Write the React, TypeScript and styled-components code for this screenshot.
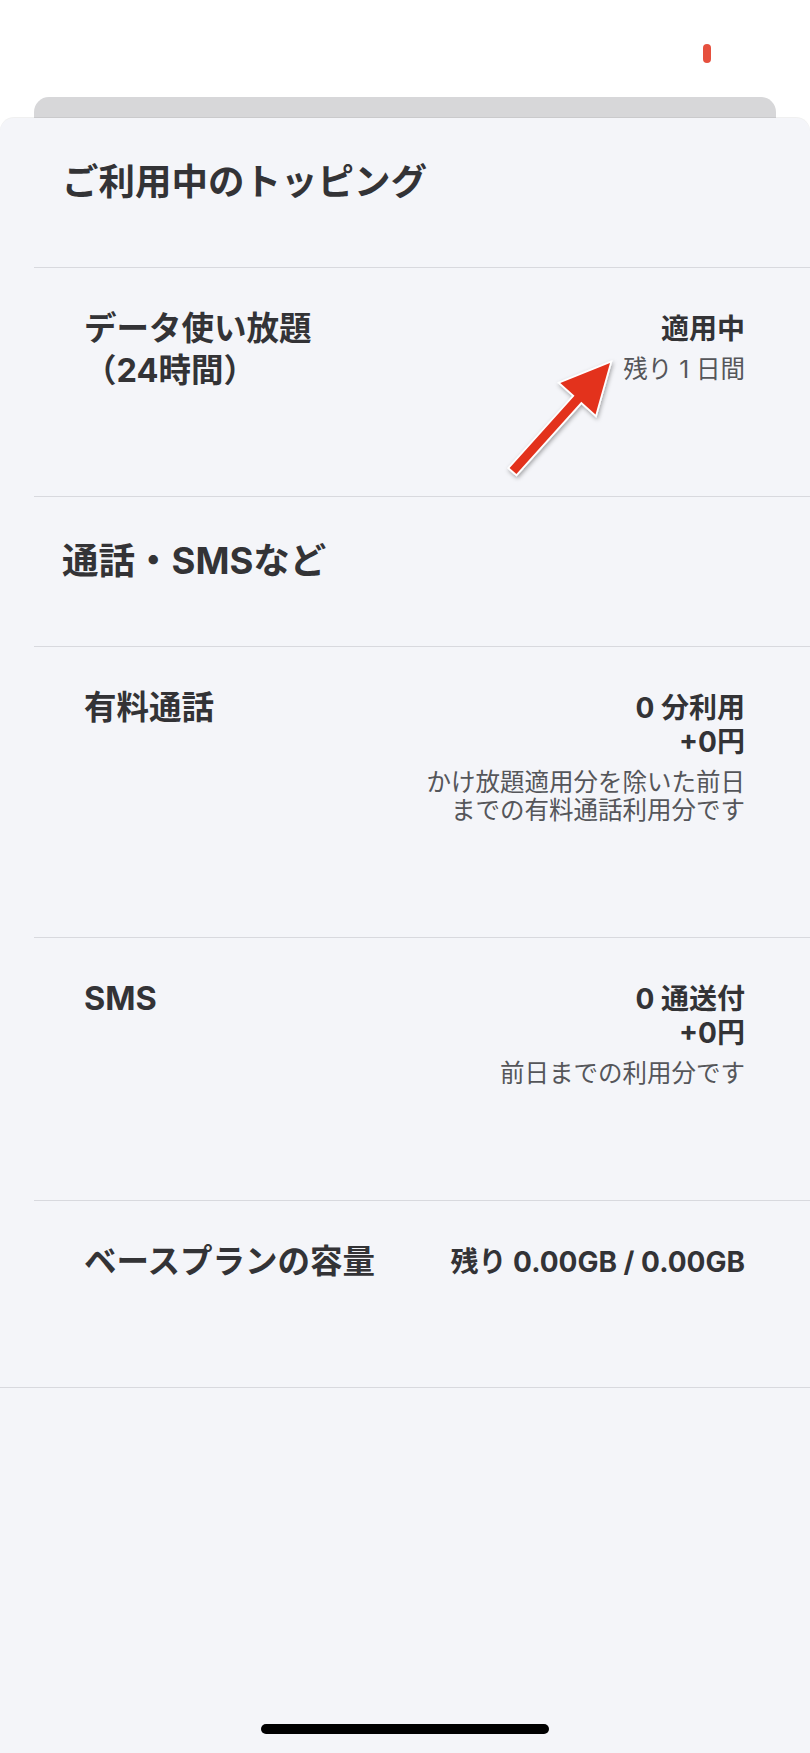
import React from 'react';
import styled, { createGlobalStyle } from 'styled-components';

const GlobalStyle = createGlobalStyle`
  html, body {
    margin: 0;
    padding: 0;
    background: #ffffff;
  }
  body {
    font-family: Inter, "Noto Sans CJK JP", "Noto Sans", sans-serif;
    color: #303033;
  }
  * {
    box-sizing: border-box;
  }
`;

interface UsageRow {
  label: React.ReactNode;
  values: string[];
  note?: React.ReactNode;
  pointer?: boolean;
}

const toppings: UsageRow[] = [
  {
    label: (
      <>
        データ使い放題
        <br />
        （24時間）
      </>
    ),
    values: ['適用中'],
    note: '残り 1 日間',
    pointer: true,
  },
];

const calls: UsageRow[] = [
  {
    label: '有料通話',
    values: ['0 分利用', '+0円'],
    note: (
      <>
        かけ放題適用分を除いた前日
        <br />
        までの有料通話利用分です
      </>
    ),
  },
  {
    label: 'SMS',
    values: ['0 通送付', '+0円'],
    note: '前日までの利用分です',
  },
  {
    label: 'ベースプランの容量',
    values: ['残り 0.00GB / 0.00GB'],
  },
];

// red annotation arrow drawn over the first row
const PointerArrow: React.FC = () => (
  <ArrowSvg width={135} height={150} viewBox="495 340 135 150">
    <defs>
      <filter id="arrowShadow" x="-30%" y="-30%" width="160%" height="160%">
        <feDropShadow dx="1" dy="2" stdDeviation="2" floodColor="#000" floodOpacity="0.35" />
      </filter>
    </defs>
    <polygon
      points="516.4,473 581.3,400.8 595.5,413.6 610,362 560.3,382 574.5,394.8 509.6,467"
      fill="#e3321f"
      stroke="#ffffff"
      strokeWidth={3.5}
      strokeLinejoin="miter"
      paintOrder="stroke"
      filter="url(#arrowShadow)"
    />
  </ArrowSvg>
);

const Row: React.FC<{ row: UsageRow }> = ({ row }) => (
  <ItemRow>
    <ItemLabel>{row.label}</ItemLabel>
    <ItemValues>
      {row.values.map((v) => (
        <ValueLine key={v}>{v}</ValueLine>
      ))}
      {row.note && <NoteText>{row.note}</NoteText>}
    </ItemValues>
    {row.pointer && <PointerArrow />}
  </ItemRow>
);

const App: React.FC = () => {
  return (
    <>
      <GlobalStyle />
      <Screen>
        <StatusArea>
          <RecordingDot />
        </StatusArea>
        <BehindCard />
        <Sheet>
          <ListFrame>
            <ListInner>
              <SectionTitle>ご利用中のトッピング</SectionTitle>
              {toppings.map((r, i) => (
                <Row key={i} row={r} />
              ))}
              <SectionTitle $divided>通話・SMSなど</SectionTitle>
              {calls.map((r, i) => (
                <Row key={i} row={r} />
              ))}
            </ListInner>
          </ListFrame>
          <HomeIndicator />
        </Sheet>
      </Screen>
    </>
  );
};

const Screen = styled.div`
  width: 810px;
  min-height: 1753px;
  display: flex;
  flex-direction: column;
  background: #ffffff;
  overflow: hidden;
`;

const StatusArea = styled.div`
  height: 97px;
  display: flex;
  justify-content: flex-end;
  align-items: flex-start;
  padding: 44px 99px 0 0;
`;

const RecordingDot = styled.div`
  width: 8px;
  height: 19px;
  border-radius: 4px;
  background: #e6503e;
`;

const BehindCard = styled.div`
  height: 21px;
  margin: 0 34px;
  background: #d7d7d9;
  border-radius: 15px 15px 0 0;
`;

const Sheet = styled.div`
  flex: 1;
  display: flex;
  flex-direction: column;
  background: #f4f5f9;
  border-radius: 14px 14px 0 0;
  box-shadow: 0 -1px 0 rgba(0, 0, 0, 0.06);
`;

const ListFrame = styled.div`
  border-bottom: 1px solid #d8d9de;
`;

const ListInner = styled.div`
  margin-left: 34px;
`;

const SectionTitle = styled.h2<{ $divided?: boolean }>`
  margin: 0;
  padding: 40px 0 61px 28px;
  font-size: 36.5px;
  line-height: 48px;
  font-weight: 700;
  color: #333336;
  border-top: ${({ $divided }) => ($divided ? '1px solid #d8d9de' : 'none')};
`;

const ItemRow = styled.div`
  position: relative;
  display: flex;
  justify-content: space-between;
  align-items: flex-start;
  gap: 24px;
  padding: 40px 65px 104px 50px;
  border-top: 1px solid #d8d9de;
`;

const ItemLabel = styled.div`
  font-size: 32.5px;
  line-height: 42px;
  font-weight: 700;
  color: #333336;
  white-space: nowrap;
`;

const ItemValues = styled.div`
  display: flex;
  flex-direction: column;
  align-items: flex-end;
  text-align: right;
  padding-top: 4px;
`;

const ValueLine = styled.div`
  font-size: 28px;
  line-height: 34px;
  font-weight: 700;
  color: #333336;
  white-space: nowrap;
`;

const NoteText = styled.div`
  margin: 9px 0 9px;
  font-size: 24.5px;
  line-height: 28px;
  font-weight: 400;
  color: #55565a;
  white-space: nowrap;
`;

const ArrowSvg = styled.svg`
  position: absolute;
  left: 461px;
  top: 73px;
  overflow: visible;
`;

const HomeIndicator = styled.div`
  width: 288px;
  height: 10px;
  margin: auto auto 19px;
  border-radius: 5px;
  background: #000000;
`;

export default App;
